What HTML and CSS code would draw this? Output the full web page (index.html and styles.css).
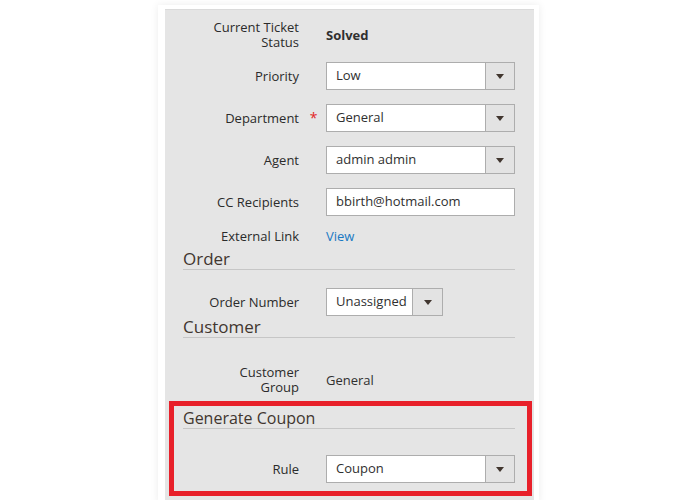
FILE: index.html
```html
<!DOCTYPE html>
<html lang="en">
<head>
  <meta charset="UTF-8" />
  <title>Ticket Info</title>
  <link rel="stylesheet" href="styles.css">
</head>
<body>

<div class="card">
  <div class="panel">

    <div class="row status-row">
      <label class="label">Current Ticket<br>Status</label>
      <span></span>
      <div class="value bold">Solved</div>
    </div>

    <div class="row">
      <label class="label">Priority</label>
      <span></span>
      <div class="select"><span class="select-text">Low</span><span class="select-btn"><i class="arrow"></i></span></div>
    </div>

    <div class="row">
      <label class="label">Department</label>
      <span class="required">*</span>
      <div class="select"><span class="select-text">General</span><span class="select-btn"><i class="arrow"></i></span></div>
    </div>

    <div class="row">
      <label class="label">Agent</label>
      <span></span>
      <div class="select"><span class="select-text">admin admin</span><span class="select-btn"><i class="arrow"></i></span></div>
    </div>

    <div class="row cc-row">
      <label class="label">CC Recipients</label>
      <span></span>
      <div class="input">bbirth@hotmail.com</div>
    </div>

    <div class="row link-row">
      <label class="label">External Link</label>
      <span></span>
      <a class="link" href="#">View</a>
    </div>

    <h3 class="section-title order-title">Order</h3>

    <div class="row order-row">
      <label class="label">Order Number</label>
      <span></span>
      <div class="select small"><span class="select-text">Unassigned</span><span class="select-btn"><i class="arrow"></i></span></div>
    </div>

    <h3 class="section-title customer-title">Customer</h3>

    <div class="row group-row">
      <label class="label">Customer<br>Group</label>
      <span></span>
      <div class="value">General</div>
    </div>

    <h3 class="section-title coupon-title">Generate Coupon</h3>

    <div class="row rule-row">
      <label class="label">Rule</label>
      <span></span>
      <div class="select"><span class="select-text">Coupon</span><span class="select-btn"><i class="arrow"></i></span></div>
    </div>

    <!-- highlight around the coupon section -->
    <div class="highlight"></div>
  </div>
</div>

</body>
</html>
```

FILE: styles.css
```css
body, html {
  margin: 0;
  padding: 0;
  background: #fff;
  font-family: "Open Sans", "Liberation Sans", sans-serif;
  height: 100%;
  overflow: hidden;
}

.card {
  width: 369px;
  height: 495px;
  margin: 5px 0 0 158px;
  padding: 4px 5px 0 7px;
  box-sizing: content-box;
  background: #fff;
  box-shadow: 0 0 8px rgba(0, 0, 0, 0.08);
  overflow: hidden;
}

.panel {
  position: relative;
  background: #e5e5e5;
  padding: 10px 19px 0 0;
  height: 491px;
  box-sizing: border-box;
  border-top: 1px solid #dadada;
}

.row {
  display: grid;
  grid-template-columns: 134px 27px 189px;
  align-items: center;
  margin-bottom: 14px;
}

.label {
  text-align: right;
  font-size: 13px;
  line-height: 15px;
  color: #2b2b2b;
}

.required {
  color: #e22626;
  font-size: 14px;
  text-align: center;
  padding-left: 2px;
  line-height: 14px;
}

.value {
  font-size: 13px;
  color: #303030;
}

.bold {
  font-weight: 700;
}

.status-row {
  margin-bottom: 12px;
}

.select, .input {
  display: flex;
  height: 28px;
  box-sizing: border-box;
  border: 1px solid #adadad;
  background: #fff;
  font-size: 13px;
  color: #303030;
}

.select-text {
  flex: 1;
  padding-left: 9px;
  line-height: 25px;
}

.select-btn {
  width: 28px;
  background: #e3e3e3;
  border-left: 1px solid #adadad;
  display: flex;
  align-items: center;
  justify-content: center;
}

.arrow {
  width: 0;
  height: 0;
  border-left: 4px solid transparent;
  border-right: 4px solid transparent;
  border-top: 5px solid #41362f;
}

.select.small {
  width: 117px;
}

.select.small .select-btn {
  width: 29px;
}

.input {
  padding-left: 9px;
  line-height: 25px;
}

.cc-row {
  margin-bottom: 12px;
}

.link-row .label {
  line-height: 16px;
}

.link {
  font-size: 13px;
  color: #1979c3;
  text-decoration: none;
  line-height: 16px;
}

.section-title {
  margin: 0 0 0 18px;
  font-size: 17px;
  font-weight: 400;
  line-height: 20px;
  color: #41362f;
  border-bottom: 1px solid #c6c6c6;
}

.order-title {
  margin-top: -9px;
}

.order-row {
  margin-top: 18px;
  margin-bottom: 1px;
}

.customer-title {
  margin-top: 0;
}

.group-row {
  margin-top: 27px;
  margin-bottom: 13px;
}

.coupon-title {
  font-size: 16px;
}

.rule-row {
  margin-top: 26px;
}

.highlight {
  position: absolute;
  left: 4px;
  top: 391px;
  width: 363px;
  height: 95px;
  box-sizing: border-box;
  border: 5px solid #e8202a;
}
```
